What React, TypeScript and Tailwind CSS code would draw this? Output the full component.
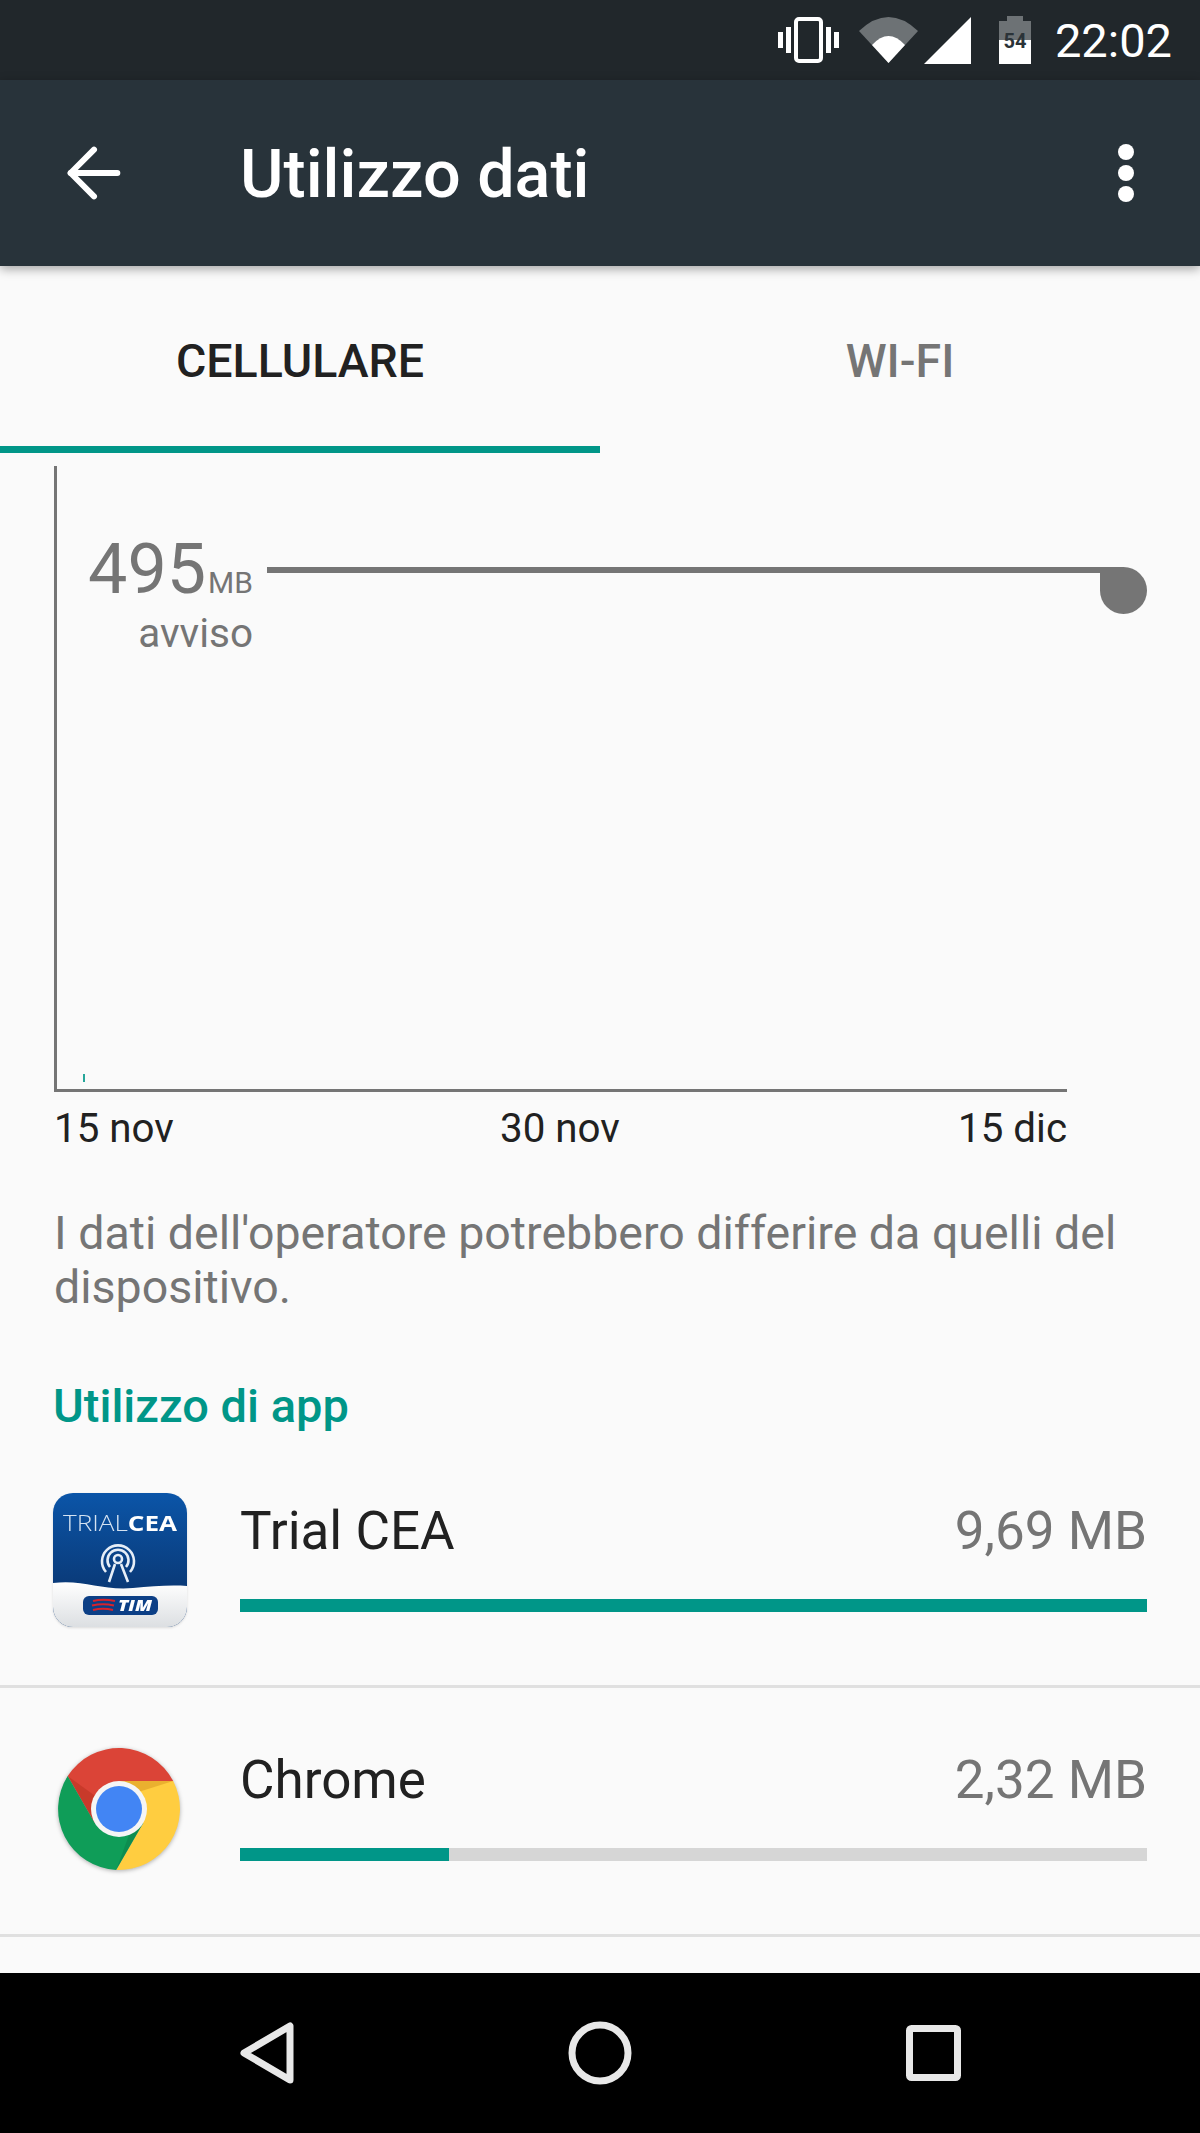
import { ArrowLeft } from "lucide-react";

function StatusIcons() {
  return (
    <div className="flex h-[80px] items-center justify-end bg-[#21272b] pr-[28px] text-white">
      {/* vibrate */}
      <svg width="61" height="46" viewBox="0 0 61 46" className="mb-[1px]">
        <rect x="18" y="2" width="25" height="42" rx="3" fill="none" stroke="#fff" strokeWidth="4" />
        <rect x="8" y="10" width="5" height="26" fill="#fff" />
        <rect x="0" y="15" width="5" height="16" fill="#fff" />
        <rect x="48" y="10" width="5" height="26" fill="#fff" />
        <rect x="56" y="15" width="5" height="16" fill="#fff" />
      </svg>
      {/* wifi */}
      <svg width="59" height="46" viewBox="0 0 59 46" className="ml-[20px] mb-[1px]">
        <path d="M0 14 Q29.5 -14 59 14 L29.5 46 Z" fill="#6d7275" />
        <path d="M13 28 Q29.5 10 46 28 L29.5 46 Z" fill="#fff" />
      </svg>
      {/* signal */}
      <svg width="47" height="47" viewBox="0 0 47 47" className="ml-[6px]">
        <path d="M0 47 L47 47 L47 0 Z" fill="#fff" />
      </svg>
      {/* battery */}
      <svg width="32" height="48" viewBox="0 0 32 48" className="ml-[28px]">
        <path d="M8 0 H24 V5 H32 V24 H0 V5 H8 Z" fill="#6d7275" />
        <rect x="0" y="24" width="32" height="24" fill="#fff" />
        <text x="16" y="32" textAnchor="middle" fontSize="20" fontWeight="700" fontFamily="Roboto, sans-serif" fill="#2b3338">
          54
        </text>
      </svg>
      <span className="ml-[24px] font-['Roboto',sans-serif] text-[47px] leading-none">22:02</span>
    </div>
  );
}

function TrialCeaIcon() {
  return (
    <svg width="134" height="134" viewBox="0 0 134 134" className="shrink-0 drop-shadow-[0_1px_1px_rgba(0,0,0,0.12)]">
      <defs>
        <linearGradient id="tcBlue" x1="0" y1="0" x2="0" y2="1">
          <stop offset="0" stopColor="#0b55a8" />
          <stop offset="0.7" stopColor="#0a3a78" />
        </linearGradient>
        <linearGradient id="tcWhite" x1="0" y1="0" x2="0" y2="1">
          <stop offset="0" stopColor="#ffffff" />
          <stop offset="1" stopColor="#dcdfe2" />
        </linearGradient>
        <clipPath id="tcClip">
          <rect width="134" height="134" rx="20" />
        </clipPath>
      </defs>
      <g clipPath="url(#tcClip)">
        <rect width="134" height="134" fill="url(#tcBlue)" />
        <path d="M0 90 C30 86 50 98 80 95 C100 93 118 92 134 93 V134 H0 Z" fill="url(#tcWhite)" />
      </g>
      <text x="10" y="38" fontSize="22" fontWeight="300" fontFamily="'Open Sans', sans-serif" fill="#d5e3f2" textLength="114" lengthAdjust="spacingAndGlyphs">
        TRIAL
        <tspan fontWeight="700" fill="#fff">CEA</tspan>
      </text>
      <g fill="none" stroke="#e6eef7" strokeWidth="2.6">
        <circle cx="65" cy="66" r="4" />
        <path d="M57 74 A10.5 10.5 0 1 1 73 74" />
        <path d="M53 79 A16 16 0 1 1 77 79" />
        <path d="M62 71 L56 89 M68 71 L75 89" />
      </g>
      <rect x="30" y="103" width="75" height="19" rx="6" fill="#0c3f86" />
      <g stroke="#d8232a" strokeWidth="2.2" fill="none">
        <path d="M40 108 Q50 105.5 62 108" />
        <path d="M39 112.5 Q50 110 61 112.5" />
        <path d="M40 117 Q50 114.5 60 117" />
      </g>
      <text x="65" y="118" fontSize="15" fontWeight="800" fontStyle="italic" fontFamily="'Open Sans', sans-serif" fill="#fff" textLength="34" lengthAdjust="spacingAndGlyphs">
        TIM
      </text>
    </svg>
  );
}

function ChromeIcon() {
  return (
    <svg width="124" height="124" viewBox="0 0 124 124" className="shrink-0 drop-shadow-[0_1px_2px_rgba(0,0,0,0.3)]">
      <path d="M116.2 34 A61 61 0 0 0 10.7 29.1 L37.75 76 L62 34 Z" fill="#db4437" />
      <path d="M116.2 34 A61 61 0 0 1 59.15 122.9 L86.25 76 L62 34 Z" fill="#ffcd40" />
      <path d="M59.15 122.9 A61 61 0 0 1 10.7 29.1 L37.75 76 L86.25 76 Z" fill="#0f9d58" />
      <path d="M10.7 29.1 L37.75 76 L48 56 Z" fill="#a52714" opacity="0.35" />
      <path d="M62 34 L116.2 34 L72 48 Z" fill="#c47a10" opacity="0.35" />
      <path d="M59.15 122.9 L86.25 76 L72 88 Z" fill="#0b6b3a" opacity="0.3" />
      <circle cx="62" cy="62" r="28" fill="#f5f5f5" />
      <circle cx="62" cy="62" r="23" fill="#4285f4" />
    </svg>
  );
}

function AppRow({ name, size, pct, icon }: { name: string; size: string; pct: number; icon: React.ReactNode }) {
  return (
    <div className="flex h-[249px] border-b-[3px] border-[#e0e0e0] pr-[53px]">
      <div className="flex w-[240px] shrink-0 items-center pb-[5px] pl-[53px]">{icon}</div>
      <div className="flex-1 pt-[65px]">
        <div className="flex h-[56px] items-center justify-between">
          <span className="text-[53px] text-[#212121]">{name}</span>
          <span className="text-[53px] text-[#757575]">{size}</span>
        </div>
        <div className="mt-[39px] h-[13px] bg-[#d6d6d6]">
          <div className="h-full bg-[#009688]" style={{ width: `${pct}%` }} />
        </div>
      </div>
    </div>
  );
}

export default function App() {
  return (
    <div className="flex h-[2133px] w-[1200px] flex-col overflow-hidden bg-[#fafafa] font-['Roboto',sans-serif]">
      <StatusIcons />

      {/* Toolbar */}
      <div className="relative z-10 flex h-[186px] items-center bg-[#28333a] text-white shadow-[0_3px_10px_rgba(0,0,0,0.35)]">
        <ArrowLeft className="ml-[54px] size-[80px]" strokeWidth={1.8} />
        <h1 className="ml-[106px] mt-[4px] text-[66.5px] font-medium">Utilizzo dati</h1>
        <div className="ml-auto mr-[66px] flex flex-col gap-[5px]">
          <span className="size-[16px] rounded-full bg-white" />
          <span className="size-[16px] rounded-full bg-white" />
          <span className="size-[16px] rounded-full bg-white" />
        </div>
      </div>

      {/* Tabs */}
      <div className="flex h-[187px] shrink-0">
        <div className="flex w-[600px] items-center justify-center border-b-[7px] border-[#009688] pt-[12px] text-[46.5px] font-medium text-[#212121]">
          CELLULARE
        </div>
        <div className="flex w-[600px] items-center justify-center pb-[7px] pt-[12px] text-[46.5px] font-medium text-[#757575]">
          WI-FI
        </div>
      </div>

      <div className="flex-1 overflow-hidden">
        {/* Chart */}
        <div className="relative ml-[54px] mt-[13px] h-[626px] w-[1013px] border-b-[3px] border-l-[3px] border-[#757575]">
          <div className="absolute left-[26px] top-[608px] h-[8px] w-[2px] bg-[#26a69a]" />
          <div className="absolute left-[74px] top-[66px] w-[122px] whitespace-nowrap text-right text-[#757575]">
            <div className="flex items-baseline justify-end leading-none">
              <span className="text-[70px] leading-[74px]">495</span>
              <span className="ml-[2px] text-[30px]">MB</span>
            </div>
            <div className="mt-[5px] text-[40.5px] leading-[44px]">avviso</div>
          </div>
          <div className="absolute left-[210px] top-[101px] h-[6px] w-[850px] bg-[#757575]" />
          <div className="absolute left-[1043px] top-[101px] size-[47px] rounded-full rounded-tl-none bg-[#757575]" />
        </div>

        <div className="ml-[54px] mt-[14px] flex w-[1013px] justify-between text-[40.3px] leading-[46px] text-[#212121]">
          <span>15 nov</span>
          <span className="mr-[12px]">30 nov</span>
          <span>15 dic</span>
        </div>

        <p className="ml-[54px] mt-[54px] w-[1100px] text-[46.5px] leading-[54px] text-[#757575]">
          I dati dell'operatore potrebbero differire da quelli del dispositivo.
        </p>

        <h2 className="ml-[53px] mt-[65px] text-[47px] font-medium leading-[54px] text-[#009688]">Utilizzo di app</h2>

        <div className="mt-[6px]">
          <AppRow name="Trial CEA" size="9,69 MB" pct={100} icon={<TrialCeaIcon />} />
          <AppRow name="Chrome" size="2,32 MB" pct={23} icon={<div className="ml-[4px]"><ChromeIcon /></div>} />
        </div>
      </div>

      {/* Nav bar */}
      <div className="flex h-[160px] shrink-0 items-center bg-black">
        <svg width="1200" height="160" viewBox="0 0 1200 160" fill="none" stroke="#e8e8e8" strokeWidth="7" strokeLinejoin="round">
          <path d="M244 80 L290 53 L290 107 Z" />
          <circle cx="600" cy="80" r="28" />
          <rect x="909.5" y="55.5" width="48" height="49" rx="2" />
        </svg>
      </div>
    </div>
  );
}
